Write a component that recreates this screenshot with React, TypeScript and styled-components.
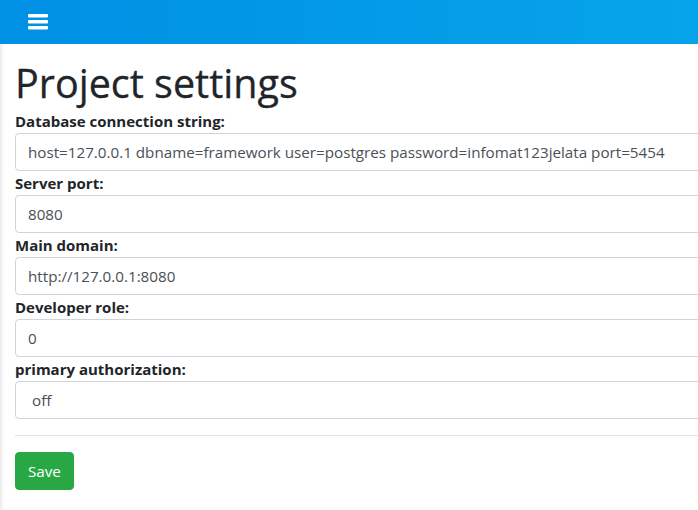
import React from "react";
import styled, { createGlobalStyle } from "styled-components";

const GlobalStyle = createGlobalStyle`
  html, body {
    margin: 0;
    padding: 0;
    background: #fff;
    overflow: hidden;
  }
  body {
    font-family: "Open Sans", "Noto Sans", "Liberation Sans", sans-serif;
    color: #212529;
    box-shadow: inset 4px 0 4px -3px rgba(0, 0, 0, 0.12);
    min-height: 510px;
  }
`;

const Page = styled.div`
  width: 698px;
  height: 510px;
  overflow: hidden;
`;

const Navbar = styled.header`
  height: 44px;
  display: flex;
  align-items: center;
  padding: 0 28px;
  background: linear-gradient(to right, #0090e4, #06a4ea);
`;

const MenuButton = styled.button`
  border: 0;
  padding: 0;
  background: transparent;
  display: flex;
  cursor: pointer;
`;

const Content = styled.main`
  width: 800px;
  padding: 0 15px;
`;

const Title = styled.h1`
  margin: 15px 0 2px;
  font-size: 39.5px;
  font-weight: 500;
  line-height: 48px;
  -webkit-text-stroke: 0.3px #212529;
`;

const Group = styled.div`
  display: flex;
  flex-direction: column;
`;

const Label = styled.label`
  font-size: 15px;
  font-weight: 700;
  line-height: 24px;
`;

const Input = styled.input`
  box-sizing: border-box;
  height: 38px;
  width: 100%;
  padding: 6px 12px;
  font: inherit;
  font-size: 15.2px;
  color: #495057;
  background: #fff;
  border: 1px solid #ced4da;
  border-radius: 4px;
  outline: none;
`;

const Select = styled.select`
  box-sizing: border-box;
  height: 38px;
  width: 100%;
  padding: 6px 12px;
  font: inherit;
  font-size: 15.2px;
  color: #495057;
  background: #fff;
  border: 1px solid #ced4da;
  border-radius: 4px;
  outline: none;
  appearance: none;
  text-indent: 4px;
`;

const Divider = styled.hr`
  margin: 16px 0;
  border: 0;
  border-top: 1px solid #e3e3e3;
`;

const SaveButton = styled.button`
  height: 38px;
  padding: 0 12px;
  font: inherit;
  font-size: 15.2px;
  color: #fff;
  background: #28a745;
  border: 1px solid #28a745;
  border-radius: 4px;
  cursor: pointer;
`;

function BarsIcon() {
  return (
    <svg width="20" height="17" viewBox="0 0 20 17" fill="#fff">
      <rect x="0" y="0" width="20" height="3.6" rx="1" />
      <rect x="0" y="6" width="20" height="3.6" rx="1" />
      <rect x="0" y="12" width="20" height="3.6" rx="1" />
    </svg>
  );
}

const fields = [
  {
    label: "Database connection string:",
    value:
      "host=127.0.0.1 dbname=framework user=postgres password=infomat123jelata port=5454",
  },
  { label: "Server port:", value: "8080" },
  { label: "Main domain:", value: "http://127.0.0.1:8080" },
  { label: "Developer role:", value: "0" },
];

function App() {
  return (
    <Page>
      <GlobalStyle />
      <Navbar>
        <MenuButton aria-label="menu">
          <BarsIcon />
        </MenuButton>
      </Navbar>
      <Content>
        <Title>Project settings</Title>
        {fields.map((f) => (
          <Group key={f.label}>
            <Label>{f.label}</Label>
            <Input defaultValue={f.value} />
          </Group>
        ))}
        <Group>
          <Label>primary authorization:</Label>
          <Select defaultValue="off">
            <option value="off">off</option>
            <option value="on">on</option>
          </Select>
        </Group>
        <Divider />
        <SaveButton>Save</SaveButton>
      </Content>
    </Page>
  );
}

export default App;
